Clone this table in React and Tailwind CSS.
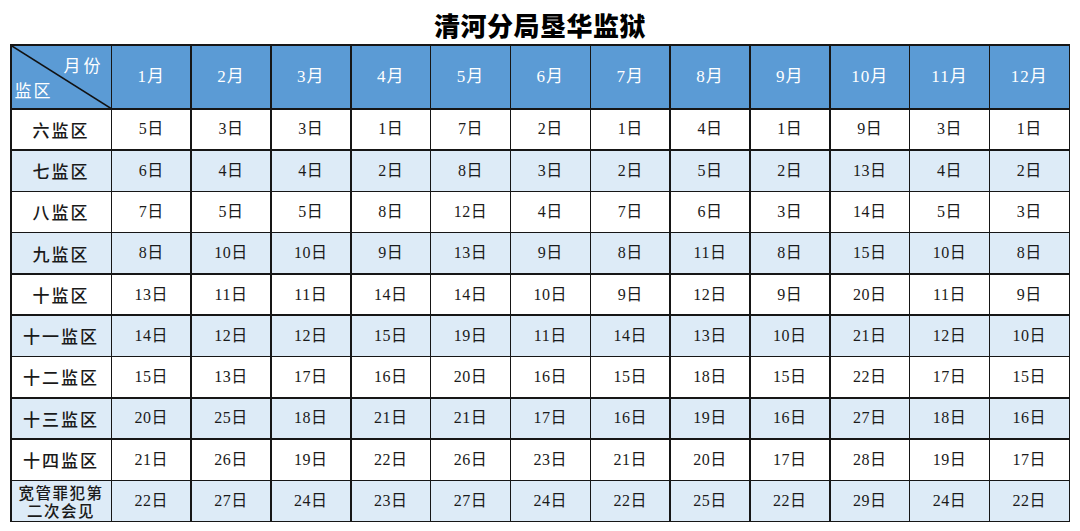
import React from "react";

const months = ["1月","2月","3月","4月","5月","6月","7月","8月","9月","10月","11月","12月"];
const rows = [
  ["六监区", [5,3,3,1,7,2,1,4,1,9,3,1]],
  ["七监区", [6,4,4,2,8,3,2,5,2,13,4,2]],
  ["八监区", [7,5,5,8,12,4,7,6,3,14,5,3]],
  ["九监区", [8,10,10,9,13,9,8,11,8,15,10,8]],
  ["十监区", [13,11,11,14,14,10,9,12,9,20,11,9]],
  ["十一监区", [14,12,12,15,19,11,14,13,10,21,12,10]],
  ["十二监区", [15,13,17,16,20,16,15,18,15,22,17,15]],
  ["十三监区", [20,25,18,21,21,17,16,19,16,27,18,16]],
  ["十四监区", [21,26,19,22,26,23,21,20,17,28,19,17]],
  ["宽管罪犯第二次会见", [22,27,24,23,27,24,22,25,22,29,24,22]],
];

const serif = { fontFamily: '"Liberation Serif", "Noto Sans CJK SC", serif' };
const cjk = { fontFamily: '"Noto Sans CJK SC", sans-serif' };

export default function App() {
  return (
    <div className="w-[1080px] h-[531px] bg-white overflow-hidden" style={serif}>
      <div className="h-[44px] flex items-center justify-center pt-[4px]">
        <span className="text-[26px] font-black text-black tracking-[0.5px]" style={cjk}>
          清河分局垦华监狱
        </span>
      </div>
      <div className="ml-[10px] w-[1060px] bg-[#161616] p-[1.5px] grid grid-cols-[99px_repeat(12,minmax(0,1fr))] grid-rows-[62.5px_repeat(10,39.8px)] gap-[1.5px]">
        <div className="relative bg-[#5b9bd5] text-white text-[17px]">
          <svg className="absolute inset-0 w-full h-full" preserveAspectRatio="none" viewBox="0 0 100 100">
            <line x1="0" y1="0" x2="100" y2="100" stroke="#111" strokeWidth="1.5" vectorEffect="non-scaling-stroke" />
          </svg>
          <span className="absolute right-[7px] top-[6px] tracking-[3px]" style={cjk}>月份</span>
          <span className="absolute left-[3px] bottom-[6px] tracking-[2px]" style={cjk}>监区</span>
        </div>
        {months.map((m) => (
          <div key={m} className="bg-[#5b9bd5] text-white text-[17px] flex items-center justify-center tracking-[1px]">
            {m}
          </div>
        ))}
        {rows.map(([label, vals], i) => {
          const bg = i % 2 === 1 ? "bg-[#ddebf7]" : "bg-white";
          const last = i === rows.length - 1;
          return (
            <React.Fragment key={label}>
              {last ? (
                <div className={`${bg} flex flex-col items-center justify-center text-[#1a1a1a] font-medium text-[15.5px] leading-[18px] tracking-[1.5px]`} style={cjk}>
                  <span>宽管罪犯第</span>
                  <span>二次会见</span>
                </div>
              ) : (
                <div className={`${bg} flex items-center justify-center text-[#1a1a1a] font-medium text-[17px] tracking-[2px]`} style={cjk}>
                  {label}
                </div>
              )}
              {vals.map((v, j) => (
                <div key={j} className={`${bg} flex items-center justify-center text-[16px] text-[#1a1a1a] tracking-[0.5px]`}>
                  {v}日
                </div>
              ))}
            </React.Fragment>
          );
        })}
      </div>
    </div>
  );
}
